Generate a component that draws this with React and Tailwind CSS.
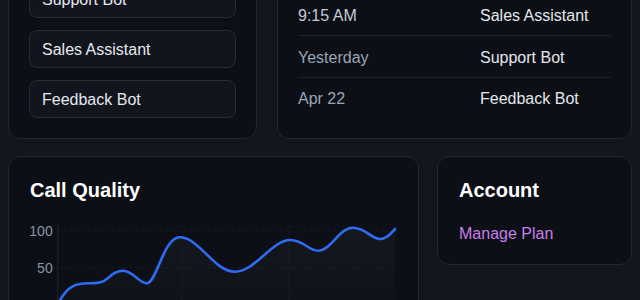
import React from 'react'

const bots = ['Support Bot', 'Sales Assistant', 'Feedback Bot']

const calls = [
  { time: '9:15 AM', agent: 'Sales Assistant', tone: 'text-[#c3cad6]' },
  { time: 'Yesterday', agent: 'Support Bot', tone: 'text-[#9aa6b8]' },
  { time: 'Apr 22', agent: 'Feedback Bot', tone: 'text-[#9aa6b8]' },
]

const linePath =
  'M28.7,84 C36,68 44,63 55,62.5 C64,62 69,63 75,60 C82,55 86,49.7 94,49.7 C104,49.7 110,62.3 117.7,62.3 C128,62.3 134,16.3 151,16.3 C170,16.3 185,50.7 206,50.7 C226,50.7 243,19 261,19 C275,19 279,29.7 289,29.7 C302,29.7 310,6.7 324,6.7 C337,6.7 342,18 351,18 C358,18 362,12 366,8'

function Card({ className = '', children }) {
  return (
    <div className={`rounded-xl border border-[#222733] bg-[#0c0f15] p-5 ${className}`}>
      {children}
    </div>
  )
}

function CallChart() {
  return (
    <svg width="369" height="120" viewBox="0 0 369 120" className="mt-[18px] block">
      <defs>
        <linearGradient id="area" x1="0" y1="0" x2="0" y2="1">
          <stop offset="0%" stopColor="#94a3b8" stopOpacity="0.06" />
          <stop offset="100%" stopColor="#94a3b8" stopOpacity="0" />
        </linearGradient>
      </defs>
      {/* grid */}
      <g stroke="#181c26" strokeWidth="1">
        <line x1="28.7" y1="4" x2="28.7" y2="120" stroke="#1e2330" />
        <line x1="153" y1="4" x2="153" y2="120" strokeDasharray="3 3" />
        <line x1="260" y1="4" x2="260" y2="120" strokeDasharray="3 3" />
        <line x1="28.7" y1="10" x2="366" y2="10" strokeDasharray="3 3" />
        <line x1="28.7" y1="46.7" x2="366" y2="46.7" strokeDasharray="3 3" />
        <line x1="24" y1="46.7" x2="28.7" y2="46.7" stroke="#1e2330" />
      </g>
      <g fill="#8b95a7" fontSize="14" fontFamily="'Liberation Sans', Arial, sans-serif" textAnchor="end">
        <text x="23.7" y="15">100</text>
        <text x="23.7" y="51.7">50</text>
        <text x="23.7" y="88.5">0</text>
      </g>
      <path d={`${linePath} L366,120 L28.7,120 Z`} fill="url(#area)" />
      <path d={linePath} fill="none" stroke="#2f6cf2" strokeWidth="2.6" strokeLinecap="round" />
    </svg>
  )
}

export default function App() {
  return (
    <div
      className="h-[300px] overflow-hidden bg-[#13161d] text-gray-100"
      style={{ fontFamily: "'Liberation Sans', Arial, sans-serif" }}
    >
      <div className="-mt-[85px] flex flex-col gap-[17px] px-2">
        <div className="flex gap-5">
          <Card className="w-[249px] shrink-0">
            <h2 className="text-xl font-semibold leading-7 text-white">Chatbots</h2>
            <ul className="mt-4 flex flex-col gap-3">
              {bots.map((name) => (
                <li
                  key={name}
                  className="flex h-[38px] items-center rounded-lg border border-[#262b37] bg-[#12151d] px-3 pt-[2px] text-base text-[#e4e7ec]"
                >
                  {name}
                </li>
              ))}
            </ul>
          </Card>

          <Card className="flex-1">
            <h2 className="text-xl font-semibold leading-7 text-white">Recent Calls</h2>
            <div className="mt-[30px]">
              {calls.map((c, i) => (
                <div
                  key={c.time}
                  className={`flex items-center pt-[2px] text-base ${
                    i < calls.length - 1 ? 'h-[42px] border-b border-[#1d2129]' : 'h-[40px]'
                  }`}
                >
                  <span className={`w-[182px] shrink-0 ${c.tone}`}>{c.time}</span>
                  <span className="text-[#e4e7ec]">{c.agent}</span>
                </div>
              ))}
            </div>
          </Card>
        </div>

        <div className="flex items-start gap-[18px]">
          <Card className="w-[411px] shrink-0 pb-10">
            <h2 className="pl-px text-xl font-semibold leading-[26px] text-white">Call Quality</h2>
            <CallChart />
          </Card>

          <Card className="flex-1 pb-[18px]">
            <h2 className="pl-px text-xl font-semibold leading-[26px] text-white">Account</h2>
            <p className="mt-[19px] pl-px text-base leading-6 text-[#c77ee8]">Manage Plan</p>
          </Card>
        </div>
      </div>
    </div>
  )
}
